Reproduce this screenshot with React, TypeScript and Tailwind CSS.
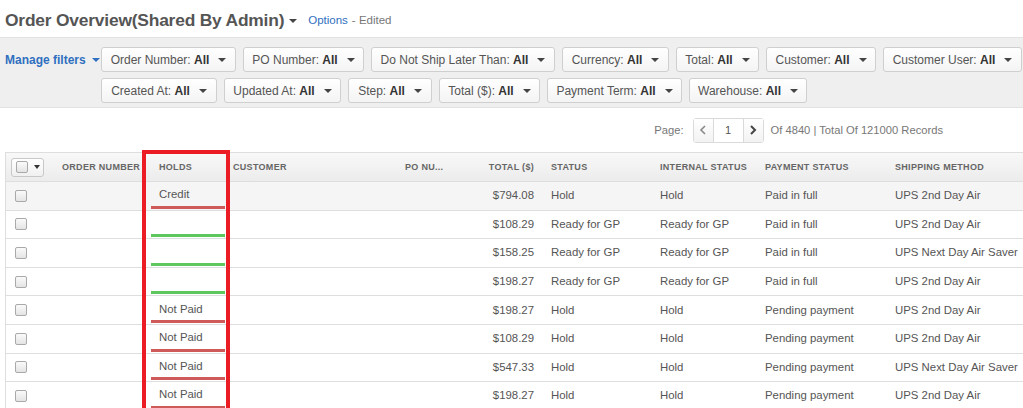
import React from "react";

const Caret = ({ color = "border-t-[#444]" }: { color?: string }) => (
  <span className={`inline-block w-0 h-0 border-x-[4px] border-x-transparent border-t-[4px] ${color}`} />
);

const row1: [string, number][] = [
  ["Order Number", 135],
  ["PO Number", 121],
  ["Do Not Ship Later Than", 184],
  ["Currency", 107],
  ["Total", 83],
  ["Customer", 110],
  ["Customer User", 139],
];
const row2: [string, number][] = [
  ["Created At", 116],
  ["Updated At", 117],
  ["Step", 84],
  ["Total ($)", 101],
  ["Payment Term", 135],
  ["Warehouse", 118],
];

const FilterBtn = ({ label, w }: { label: string; w: number }) => (
  <div
    style={{ width: w }}
    className="h-[25px] flex items-center justify-center gap-[9px] rounded-[3px] border border-[#cfcfcf] bg-gradient-to-b from-white to-[#f4f4f4] text-[12px] text-[#555]"
  >
    <span>
      {label}: <b className="text-[#333]">All</b>
    </span>
    <Caret />
  </div>
);

type Row = {
  hold: string;
  bar: "red" | "green";
  total: string;
  status: string;
  internal: string;
  payment: string;
  ship: string;
};

const rows: Row[] = [
  { hold: "Credit", bar: "red", total: "$794.08", status: "Hold", internal: "Hold", payment: "Paid in full", ship: "UPS 2nd Day Air" },
  { hold: "", bar: "green", total: "$108.29", status: "Ready for GP", internal: "Ready for GP", payment: "Paid in full", ship: "UPS 2nd Day Air" },
  { hold: "", bar: "green", total: "$158.25", status: "Ready for GP", internal: "Ready for GP", payment: "Paid in full", ship: "UPS Next Day Air Saver" },
  { hold: "", bar: "green", total: "$198.27", status: "Ready for GP", internal: "Ready for GP", payment: "Paid in full", ship: "UPS 2nd Day Air" },
  { hold: "Not Paid", bar: "red", total: "$198.27", status: "Hold", internal: "Hold", payment: "Pending payment", ship: "UPS 2nd Day Air" },
  { hold: "Not Paid", bar: "red", total: "$108.29", status: "Hold", internal: "Hold", payment: "Pending payment", ship: "UPS 2nd Day Air" },
  { hold: "Not Paid", bar: "red", total: "$547.33", status: "Hold", internal: "Hold", payment: "Pending payment", ship: "UPS Next Day Air Saver" },
  { hold: "Not Paid", bar: "red", total: "$198.27", status: "Hold", internal: "Hold", payment: "Pending payment", ship: "UPS 2nd Day Air" },
];

const Check = () => (
  <span className="inline-block w-[12px] h-[12px] rounded-[2px] border border-[#a9a9a9] bg-gradient-to-b from-[#fafafa] to-[#e4e4e4]" />
);

export default function App() {
  return (
    <div className="relative w-[1023px] h-[408px] overflow-hidden bg-white font-['Liberation_Sans',Arial,sans-serif] text-[#555]">
      {/* Title */}
      <div className="h-[37px] flex items-center pl-[5px] pt-[4px]">
        <span className="text-[17.4px] font-bold text-[#555] tracking-[-0.2px]">Order Overview(Shared By Admin)</span>
        <span className="ml-[5px] flex items-center">
          <Caret />
        </span>
        <span className="ml-[11px] text-[11.5px] text-[#2f6fc0]">Options</span>
        <span className="ml-[4px] text-[11.5px] text-[#777]">- Edited</span>
      </div>

      {/* Filters */}
      <div className="h-[71px] bg-[#efefef] border-t border-b border-[#e2e2e2] flex pt-[9px]">
        <div className="w-[101px] h-[25px] flex items-center pl-[5px] gap-[6px] text-[12px] font-bold text-[#2f6fc0]">
          Manage filters
          <Caret color="border-t-[#2f6fc0]" />
        </div>
        <div className="flex flex-col gap-[6px]">
          <div className="flex gap-[7px]">
            {row1.map(([l, w]) => (
              <FilterBtn key={l} label={l} w={w} />
            ))}
          </div>
          <div className="flex gap-[7px]">
            {row2.map(([l, w]) => (
              <FilterBtn key={l} label={l} w={w} />
            ))}
          </div>
        </div>
      </div>

      {/* Pagination */}
      <div className="h-[44px] flex items-center justify-end pr-[80px] text-[11.2px] text-[#777]">
        <span>Page:</span>
        <div className="ml-[9px] flex h-[25px] rounded-[3px] border border-[#dadada] bg-white">
          <div className="w-[20px] flex items-center justify-center border-r border-[#dadada] bg-gradient-to-b from-white to-[#f2f2f2]">
            <svg width="8" height="10" viewBox="0 0 8 10">
              <path d="M6 1 L2 5 L6 9" fill="none" stroke="#888" strokeWidth="1.6" />
            </svg>
          </div>
          <div className="w-[29px] flex items-center justify-center text-[#555]">1</div>
          <div className="w-[20px] flex items-center justify-center border-l border-[#dadada] bg-gradient-to-b from-white to-[#f2f2f2]">
            <svg width="8" height="10" viewBox="0 0 8 10">
              <path d="M2 1 L6 5 L2 9" fill="none" stroke="#444" strokeWidth="2" />
            </svg>
          </div>
        </div>
        <span className="ml-[7px]">Of 4840 | Total Of 121000 Records</span>
      </div>

      {/* Table */}
      <div className="ml-[5px] border-l border-t border-[#dedede]">
        <div className="h-[29px] flex items-center pt-[2px] bg-gradient-to-b from-[#f8f8f8] to-[#ececec] border-b border-[#dedede] text-[9px] font-bold tracking-[0.3px] text-[#666] uppercase">
          <div className="w-[45px] pl-[5px] flex items-center -mt-[2px]">
            <div className="w-[33px] h-[19px] rounded-[3px] border border-[#c8c8c8] bg-gradient-to-b from-white to-[#f0f0f0] flex items-center pl-[4px] gap-[6px]">
              <Check />
              <span className="inline-block w-0 h-0 border-x-[3px] border-x-transparent border-t-[4px] border-t-[#333]" />
            </div>
          </div>
          <div className="w-[96px] pl-[11px] whitespace-nowrap">Order Number</div>
          <div className="w-[80px] pl-[12px]">Holds</div>
          <div className="w-[164px] pl-[6px]">Customer</div>
          <div className="w-[70px] pl-[14px] whitespace-nowrap">PO Nu...</div>
          <div className="w-[80px] pr-[7px] text-right whitespace-nowrap">Total ($)</div>
          <div className="w-[110px] pl-[10px]">Status</div>
          <div className="w-[105px] pl-[9px] whitespace-nowrap">Internal Status</div>
          <div className="w-[130px] pl-[9px] whitespace-nowrap">Payment Status</div>
          <div className="flex-1 pl-[9px] whitespace-nowrap">Shipping Method</div>
        </div>
        {rows.map((r, i) => (
          <div
            key={i}
            className={`h-[28.6px] flex items-center border-b border-[#dedede] text-[11.4px] text-[#555] ${i === 0 ? "bg-[#f5f5f5]" : "bg-white"}`}
          >
            <div className="w-[45px] pl-[9px] flex items-center">
              <Check />
            </div>
            <div className="w-[96px]" />
            <div className="relative w-[80px] h-full flex items-center pl-[12px] pb-[2px]">
              {r.hold}
              <div
                className={`absolute left-[4px] right-[2px] bottom-[1px] h-[3px] ${r.bar === "red" ? "bg-[#cf5a5a]" : "bg-[#5ec85e]"}`}
              />
            </div>
            <div className="w-[164px]" />
            <div className="w-[70px]" />
            <div className="w-[80px] pr-[7px] text-right">{r.total}</div>
            <div className="w-[110px] pl-[10px] whitespace-nowrap">{r.status}</div>
            <div className="w-[105px] pl-[9px] whitespace-nowrap">{r.internal}</div>
            <div className="w-[130px] pl-[9px] whitespace-nowrap">{r.payment}</div>
            <div className="flex-1 pl-[9px] whitespace-nowrap">{r.ship}</div>
          </div>
        ))}
      </div>

      {/* Highlight box */}
      <div className="absolute left-[142px] top-[150px] w-[88px] h-[270px] border-[4px] border-[#ec1c24] pointer-events-none" />
    </div>
  );
}
